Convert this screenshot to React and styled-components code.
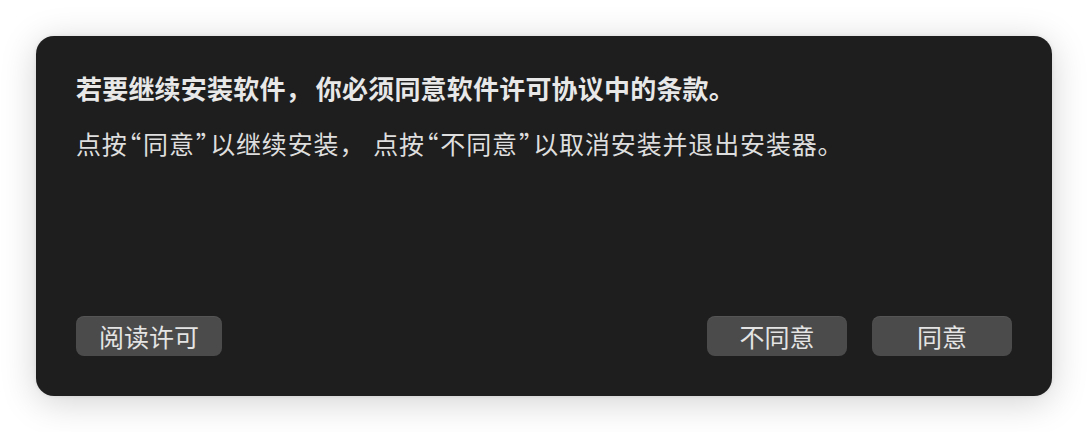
import React from 'react';
import styled, { createGlobalStyle } from 'styled-components';

const GlobalStyle = createGlobalStyle`
    html, body {
        margin: 0;
        padding: 0;
        background: #ffffff;
    }
    body {
        font-family: "Noto Sans CJK SC", "Noto Sans", sans-serif;
    }
`;

function App() {
    return (
        <>
            <GlobalStyle />
            <Page>
                <Dialog>
                    <Title>若要继续安装软件<Comma $gap={4}>，</Comma>你必须同意软件许可协议中的条款。</Title>
                    <Message>
                        点按<Quote>“</Quote>同意<Quote>”</Quote>以继续安装<Comma $gap={8}>，</Comma>点按<Quote>“</Quote>不同意<Quote>”</Quote>以取消安装并退出安装器。
                    </Message>

                    <Footer>
                        <Button>阅读许可</Button>
                        <div className='actions'>
                            <Button $width={140}>不同意</Button>
                            <Button $width={140}>同意</Button>
                        </div>
                    </Footer>
                </Dialog>
            </Page>
        </>
    );
}

export default App;

const Page = styled.div`
    width: 1088px;
    height: 432px;
    padding: 36px;
    box-sizing: border-box;
`;

const Dialog = styled.div`
    display: flex;
    flex-direction: column;
    height: 360px;
    box-sizing: border-box;
    padding: 33px 40px 40px 40px;
    background-color: #1e1e1e;
    border-radius: 18px;
    box-shadow: 0 0 4px rgba(0, 0, 0, 0.08), 0 6px 36px rgba(0, 0, 0, 0.18);
`;

const Title = styled.h1`
    margin: 0;
    font-size: 26px;
    font-weight: 700;
    line-height: 38px;
    color: #e8e8e8;
    letter-spacing: 0.2px;
`;

const Message = styled.p`
    margin: 18px 0 0 0;
    font-size: 25px;
    font-weight: 400;
    line-height: 36px;
    color: #dedede;
    letter-spacing: 0.85px;
`;

// 따옴표는 반각으로 좁게
const Quote = styled.span`
    font-feature-settings: "halt";
    margin: 0 1px;
`;

// 쉼표 뒤 여백
const Comma = styled.span`
    margin-right: ${(props) => props.$gap}px;
`;

const Footer = styled.div`
    display: flex;
    align-items: center;
    justify-content: space-between;
    margin-top: auto;
    .actions{
        display: flex;
        gap: 25px;
    }
`;

const Button = styled.button`
    width: ${(props) => (props.$width ? `${props.$width}px` : 'auto')};
    height: 40px;
    padding: 0 23px;
    border: none;
    border-radius: 8px;
    background-color: #4b4b4b;
    box-shadow: inset 0 1px 0 rgba(255, 255, 255, 0.06);
    color: #e4e4e4;
    font-family: "Noto Sans CJK SC", "Noto Sans", sans-serif;
    font-size: 25px;
    line-height: 40px;
    cursor: pointer;
`;
